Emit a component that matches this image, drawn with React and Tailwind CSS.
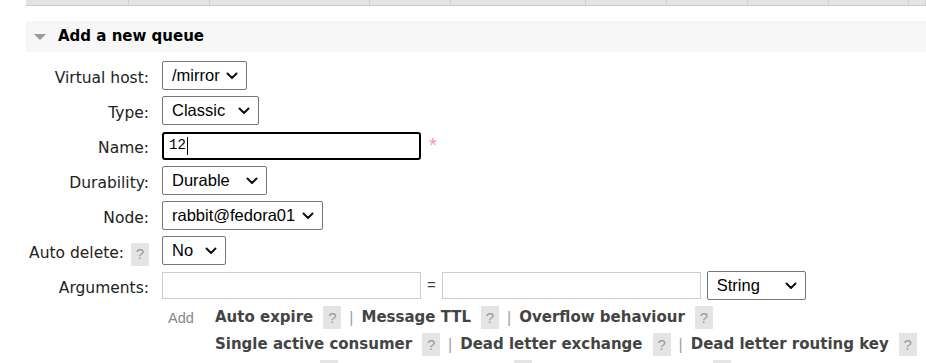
import React from 'react';

const Chevron = () => (
  <svg width="12" height="8" viewBox="0 0 12 8" className="shrink-0">
    <path d="M1.5 1.5 L6 6 L10.5 1.5" fill="none" stroke="#111" strokeWidth="2" strokeLinecap="round" strokeLinejoin="round" />
  </svg>
);

const Select = ({ value, width }) => (
  <div
    className="flex items-center justify-between h-[29px] border border-[#767676] rounded-[2px] bg-white pl-[9px] pr-[8px] text-[16.5px] text-black font-['Liberation_Sans',Arial,sans-serif]"
    style={{ width }}
  >
    <span>{value}</span>
    <Chevron />
  </div>
);

const Help = () => (
  <span className="inline-flex items-center justify-center w-[18px] h-[23px] bg-[#e4e4e4] text-[#999] text-[15px] font-normal font-['Liberation_Sans',Arial,sans-serif]">
    ?
  </span>
);

const Row = ({ label, help, children }) => (
  <div className="flex items-center h-[35px]">
    <div className="w-[149px] mt-[7px] flex items-center justify-end gap-[7px] text-[15.5px] text-[#222] font-['DejaVu_Sans',Verdana,sans-serif]">
      <span>{label}</span>
      {help && <Help />}
    </div>
    <div className="ml-[13px] flex items-center">{children}</div>
  </div>
);

const Link = ({ text, last }) => (
  <span className="flex items-center">
    <span className="font-bold text-[#444] text-[15px] font-['DejaVu_Sans',Verdana,sans-serif]">{text}</span>
    <span className="ml-[10px]"><Help /></span>
    {!last && <span className="mx-[8px] text-[#9aa3b0] text-[16px] font-['Liberation_Sans',Arial,sans-serif]">|</span>}
  </span>
);

const linkRows = [
  ['Auto expire', 'Message TTL', 'Overflow behaviour'],
  ['Single active consumer', 'Dead letter exchange', 'Dead letter routing key'],
  ['Max length', 'Max length bytes', 'Maximum priority'],
];

export default function App() {
  const cols = [113, 89, 176, 89, 148, 89, 89, 89, 88, 19];
  return (
    <div className="w-[926px] h-[363px] overflow-hidden bg-white font-['DejaVu_Sans',Verdana,sans-serif]">
      {/* table header remnant */}
      <div className="ml-[26px] h-[6px] flex bg-[#e4e4e4] border-b border-[#c8c8c8]">
        {cols.map((w, i) => (
          <div key={i} className="h-full border-r border-[#cfcfcf]" style={{ width: w }} />
        ))}
      </div>

      {/* section header */}
      <div className="ml-[26px] mt-[15px] h-[31px] bg-[#f7f7f7] flex items-center">
        <svg width="12" height="8" viewBox="0 0 12 8" className="ml-[8px]">
          <path d="M0 1 L12 1 L6 7 Z" fill="#999" />
        </svg>
        <span className="ml-[12px] font-bold text-[15px] text-black">Add a new queue</span>
      </div>

      <div className="mt-[6px]">
        <Row label="Virtual host:">
          <Select value="/mirror" width={85} />
        </Row>
        <Row label="Type:">
          <Select value="Classic" width={97} />
        </Row>
        <Row label="Name:">
          <div className="w-[259px] h-[28px] border-2 border-black rounded-[3px] flex items-center pl-[5px] text-[14px] text-black font-['Liberation_Mono',monospace]">
            12<span className="w-px h-[18px] bg-black ml-[1px]" />
          </div>
          <span className="ml-[8px] -mt-[2px] text-[#f59aae] text-[20px] leading-none font-['Liberation_Sans',Arial,sans-serif]">*</span>
        </Row>
        <Row label="Durability:">
          <Select value="Durable" width={105} />
        </Row>
        <Row label="Node:">
          <Select value="rabbit@fedora01" width={161} />
        </Row>
        <Row label="Auto delete:" help>
          <Select value="No" width={64} />
        </Row>
        <Row label="Arguments:">
          <div className="w-[259px] h-[27px] border border-[#ccc]" />
          <span className="mx-[6px] text-[15px] text-[#444] font-['Liberation_Sans',Arial,sans-serif]">=</span>
          <div className="w-[259px] h-[27px] border border-[#ccc]" />
          <span className="ml-[6px]"><Select value="String" width={99} /></span>
        </Row>
      </div>

      <div className="flex ml-[162px] mt-[3px]">
        <span className="w-[53px] pl-[6px] text-[14.5px] leading-[24px] text-[#888] font-['Liberation_Sans',Arial,sans-serif]">Add</span>
        <div className="flex flex-col gap-[4px]">
          {linkRows.map((r, i) => (
            <div key={i} className="flex items-center h-[23px]">
              {r.map((t, j) => (
                <Link key={t} text={t} last={j === r.length - 1} />
              ))}
            </div>
          ))}
        </div>
      </div>
    </div>
  );
}
